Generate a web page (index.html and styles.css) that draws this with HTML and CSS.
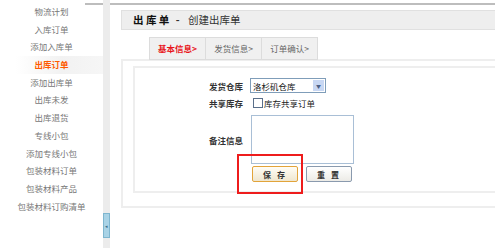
FILE: index.html
```html
<!DOCTYPE html>
<html lang="zh-CN">
<head>
  <meta charset="UTF-8">
  <title>出库单 - 创建出库单</title>
  <link rel="stylesheet" href="styles.css">
</head>
<body>
  <div class="top-rule"></div>
  <div class="page">
    <div class="sidebar">
      <ul class="nav">
        <li>物流计划</li>
        <li>入库订单</li>
        <li>添加入库单</li>
        <li class="active">出库订单</li>
        <li>添加出库单</li>
        <li>出库未发</li>
        <li>出库退货</li>
        <li>专线小包</li>
        <li>添加专线小包</li>
        <li>包装材料订单</li>
        <li>包装材料产品</li>
        <li>包装材料订购清单</li>
      </ul>
    </div>
    <div class="splitter">
      <div class="toggle">&#9666;</div>
    </div>

    <div class="main">
      <div class="title-bar">
        <b>出 库 单</b> <span class="dash">-</span> <span>创建出库单</span>
      </div>

      <div class="tabs">
        <div class="tab current">基本信息&gt;</div>
        <div class="tab">发货信息&gt;</div>
        <div class="tab">订单确认&gt;</div>
      </div>

      <div class="outer-box">
        <div class="inner-box">
          <div class="form">
            <div class="row row-select">
              <label>发货仓库</label>
              <div class="select">
                <span>洛杉矶仓库</span>
                <span class="arrow">&#9660;</span>
              </div>
            </div>
            <div class="row row-check">
              <label>共享库存</label>
              <span class="check"></span><span class="check-text">库存共享订单</span>
            </div>
            <div class="row row-note">
              <label>备注信息</label>
              <textarea></textarea>
            </div>
            <div class="row row-buttons">
              <label></label>
              <button class="btn btn-save">保 存</button>
              <button class="btn">重 置</button>
            </div>
          </div>
          <div class="mark"></div>
        </div>
      </div>
    </div>
  </div>
</body>
</html>
```

FILE: styles.css
```css
body {
  margin: 0;
  font-family: "Noto Sans CJK SC", "Liberation Sans", sans-serif;
  background: #fff;
  color: #333;
  width: 495px;
  height: 251px;
  overflow: hidden;
  position: relative;
}

.top-rule {
  position: absolute;
  top: 3px;
  left: 85px;
  right: 0;
  height: 2px;
  background: #bdbdbd;
}

.page {
  display: flex;
}

.sidebar {
  width: 103px;
}

.nav {
  list-style: none;
  margin: 0;
  padding: 3px 0 0;
}

.nav li {
  height: 17.7px;
  line-height: 17.7px;
  text-align: center;
  font-size: 8.5px;
  color: #777;
}

.nav li.active {
  color: #ff5a00;
  font-weight: bold;
  background: linear-gradient(to right, #fff 15%, #f2f2f2 60%, #f6f6f6);
}

.splitter {
  width: 7px;
  height: 248px;
  background: #ececec;
  position: relative;
}

.toggle {
  position: absolute;
  top: 213px;
  left: 0;
  width: 5px;
  height: 23px;
  background: #a9d3e6;
  border: 1px solid #7fb6cf;
  font-size: 5px;
  line-height: 23px;
  text-align: center;
  color: #3d6f8a;
}

.main {
  flex: 1;
  margin-left: 11px;
}

.title-bar {
  margin-top: 10px;
  height: 18px;
  line-height: 18px;
  background: #eeeeee;
  border: 1px solid #e0e0e0;
  border-right: none;
  padding-left: 11px;
  font-size: 10.5px;
  color: #333;
}

.title-bar b {
  color: #111;
}

.title-bar .dash {
  margin: 0 6px 0 4px;
  font-weight: bold;
}

.tabs {
  display: flex;
  margin-top: 7px;
  padding-left: 28px;
  position: relative;
  z-index: 1;
}

.tab {
  width: 55px;
  height: 21px;
  line-height: 21px;
  text-align: center;
  font-size: 8.5px;
  color: #666;
  background: #f0f0f0;
  border: 1px solid #dcdcdc;
  border-left: none;
}

.tab:first-child {
  border-left: 1px solid #dcdcdc;
}

.tab.current {
  color: #e8141a;
  font-weight: bold;
}

.outer-box {
  margin-top: -1px;
  height: 136px;
  border: 2px solid #eeeeee;
  border-right: none;
  padding: 5px 0 4px 10px;
}

.inner-box {
  height: 123px;
  border: 2px solid #eeeeee;
  border-right: none;
  position: relative;
}

.form {
  padding-top: 10px;
}

.row {
  display: flex;
  align-items: center;
}

.row label {
  width: 108px;
  margin-right: 7px;
  text-align: right;
  font-size: 8.5px;
  font-weight: bold;
  color: #333;
}

.row-select {
  height: 15px;
}

.select {
  width: 72px;
  height: 13px;
  border: 1px solid #7f9db9;
  display: flex;
  align-items: center;
  justify-content: space-between;
  font-size: 8.5px;
  color: #111;
  padding-left: 2px;
}

.select .arrow {
  width: 11px;
  height: 11px;
  margin-right: 1px;
  background: #c8d7f3;
  color: #4d6185;
  font-size: 5px;
  line-height: 11px;
  text-align: center;
}

.row-check {
  height: 16px;
  margin-top: 2px;
}

.check {
  width: 8px;
  height: 8px;
  border: 1px solid #5a6f8a;
  background: #fff;
  margin-left: 3px;
}

.check-text {
  font-size: 8.5px;
  color: #222;
  margin-left: 1px;
}

.row-note {
  margin-top: 4px;
}

textarea {
  width: 101px;
  height: 47px;
  padding: 0;
  border: 1px solid #a9bfd6;
  resize: none;
  margin-left: 1px;
}

.row-buttons {
  margin-top: 2px;
}

.btn {
  width: 46px;
  height: 16px;
  padding: 0;
  margin: 0 6px 0 2px;
  font-family: inherit;
  font-size: 8px;
  font-weight: bold;
  color: #333;
  letter-spacing: 2px;
  border: 1px solid #8a9aae;
  border-radius: 2px;
  background: linear-gradient(#ffffff, #ecebe6);
}

.btn-save {
  border-color: #e2a43a;
  background: linear-gradient(#fffdf6, #efe6cf);
}

.mark {
  position: absolute;
  left: 102px;
  top: 86px;
  width: 62px;
  height: 36px;
  border: 2px solid #ee1c1c;
}
```
